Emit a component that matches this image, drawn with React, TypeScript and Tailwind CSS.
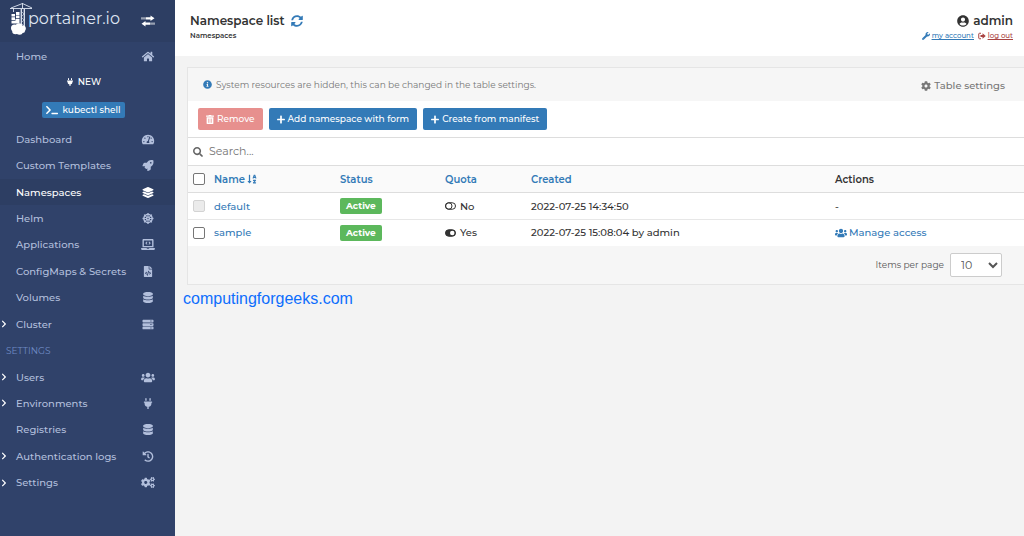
import type { ReactNode } from 'react';
import type { IconType } from 'react-icons';
import {
  FaChevronRight,
  FaCog,
  FaCogs,
  FaDatabase,
  FaDharmachakra,
  FaFileCode,
  FaHistory,
  FaHome,
  FaInfoCircle,
  FaLaptopCode,
  FaLayerGroup,
  FaPlug,
  FaPlus,
  FaRocket,
  FaSearch,
  FaServer,
  FaSortAlphaDown,
  FaSyncAlt,
  FaTachometerAlt,
  FaTerminal,
  FaTrashAlt,
  FaUserCircle,
  FaUsers,
  FaWrench,
} from 'react-icons/fa';
import clsx from 'clsx';

interface NavItem {
  label: string;
  icon: IconType;
  active?: boolean;
  expandable?: boolean;
}

const mainItems: NavItem[] = [
  { label: 'Dashboard', icon: FaTachometerAlt },
  { label: 'Custom Templates', icon: FaRocket },
  { label: 'Namespaces', icon: FaLayerGroup, active: true },
  { label: 'Helm', icon: FaDharmachakra },
  { label: 'Applications', icon: FaLaptopCode },
  { label: 'ConfigMaps & Secrets', icon: FaFileCode },
  { label: 'Volumes', icon: FaDatabase },
  { label: 'Cluster', icon: FaServer, expandable: true },
];

const settingsItems: NavItem[] = [
  { label: 'Users', icon: FaUsers, expandable: true },
  { label: 'Environments', icon: FaPlug, expandable: true },
  { label: 'Registries', icon: FaDatabase },
  { label: 'Authentication logs', icon: FaHistory, expandable: true },
  { label: 'Settings', icon: FaCogs, expandable: true },
];

const namespaces = [
  {
    name: 'default',
    system: true,
    quota: false,
    created: '2022-07-25 14:34:50',
  },
  {
    name: 'sample',
    system: false,
    quota: true,
    created: '2022-07-25 15:08:04 by admin',
  },
];

const LogoMark = () => (
  <svg viewBox="0 0 22 32" className="h-8 w-[22px]" fill="none" aria-hidden="true">
    <g stroke="#dfe5f2">
      <path d="M0 5.500h22M1 5l11.500-4.500L22 5M12.500 0v6M3.500 5v4" strokeWidth=".9" />
      <path d="M11.300 6v18M14.300 6v22" strokeWidth="1.300" />
      <path d="m11 8 3 3-3 3 3 3-3 3 3 3" strokeWidth=".6" />
    </g>
    <g fill="#fff">
      <path d="M6 9h3.500v3H6zM1.500 11H5v2.500H1.500zM6 12.500h3.500v2.800H6zM1.500 14.300H5V17H1.500zM5.500 16h4v2.500h-4zM1.500 17.800h8v2.700h-8z" />
      <circle cx="4.500" cy="25" r="3.500" />
      <circle cx="9" cy="23.500" r="3.300" />
      <circle cx="12.800" cy="25.500" r="3" />
      <circle cx="5.500" cy="28" r="3.300" />
      <circle cx="9.500" cy="28.500" r="3.300" />
      <circle cx="12.500" cy="27.500" r="2.500" />
    </g>
  </svg>
);

const TransferIcon = () => (
  <svg viewBox="0 0 14 12" className="h-3 w-3.5" fill="currentColor" aria-hidden="true">
    <path d="M4.500 2.200h5V.500L13.500 3.300 9.500 6V4.400h-5zM.500 2.200h1v2.200h-1zM2.500 2.200h1v2.200h-1z" />
    <path d="M9.500 7.600h-5V6L.500 8.700l4 2.800V9.800h5zM10.500 7.600h1v2.200h-1zM12.500 7.600h1v2.200h-1z" />
  </svg>
);

const SignOutIcon = () => (
  <svg viewBox="0 0 16 14" className="h-2 w-2" fill="none" stroke="currentColor" strokeWidth="2" aria-hidden="true">
    <path d="M6 1.500H3A1.500 1.500 0 0 0 1.500 3v8A1.500 1.500 0 0 0 3 12.500h3" />
    <path d="M5 5h4V1.500L15.500 7 9 12.500V9H5z" fill="currentColor" stroke="none" />
  </svg>
);

const QuotaIcon = ({ on }: { on: boolean }) => (
  <svg viewBox="0 0 22 15" className="h-2 w-[11px]" aria-hidden="true">
    <rect x="1" y="1" width="20" height="13" rx="6.500" fill={on ? '#333' : 'none'} stroke="#333" strokeWidth="2" />
    {on ? (
      <circle cx="14.500" cy="7.500" r="4.500" fill="#fff" />
    ) : (
      <circle cx="7.500" cy="7.500" r="6.500" fill="none" stroke="#333" strokeWidth="2" />
    )}
  </svg>
);

const NavLink = ({ label, icon: Icon, active, expandable }: NavItem) => (
  <a
    href="#"
    className={clsx(
      'flex items-center pr-5 text-[10px] font-medium',
      active ? 'bg-[#2d3e63] text-white' : 'text-[#b2bfdc]'
    )}
  >
    <span className="flex w-4 shrink-0 text-white">
      {expandable && <FaChevronRight className="h-2 w-2" />}
    </span>
    <span className="grow">{label}</span>
    <Icon className="h-[11px] w-3.5" />
  </a>
);

const Sidebar = () => (
  <aside className="flex w-[175px] shrink-0 flex-col bg-[#30426a]">
    <div className="flex h-[42px] items-center bg-[#2d3e63] pr-5 pl-2.5">
      <a href="#" className="flex items-center pb-1 text-[#dfe5f2]">
        <LogoMark />
        <span className="-ml-1 text-base leading-5">portainer.io</span>
      </a>
      <button type="button" aria-label="Toggle sidebar" className="ml-auto text-white">
        <TransferIcon />
      </button>
    </div>
    <nav>
      <div className="grid h-7">
        <NavLink label="Home" icon={FaHome} />
      </div>
      <div className="flex flex-col items-center pr-2 text-[9px] font-medium text-white">
        <p className="flex h-6 items-center gap-1">
          <FaPlug className="h-2 w-2" /> NEW
        </p>
        <button
          type="button"
          className="my-2 flex h-4 items-center gap-1 rounded-xs bg-[#337ab7] px-1"
        >
          <FaTerminal className="h-2.5 w-3" /> kubectl shell
        </button>
      </div>
      <div className="grid min-h-[370px] auto-rows-fr">
        {mainItems.map(item => (
          <NavLink key={item.label} {...item} />
        ))}
        <p className="flex items-center pl-1.5 text-[9px] text-[#6f8bc4]">SETTINGS</p>
        {settingsItems.map(item => (
          <NavLink key={item.label} {...item} />
        ))}
      </div>
    </nav>
  </aside>
);

const PageHeader = () => (
  <header className="flex h-14 justify-between bg-white pt-3 pr-[11px] pl-[15px]">
    <div>
      <h1 className="flex items-center gap-1.5 text-[12px] leading-[18px] font-semibold">
        Namespace list
        <button type="button" aria-label="Refresh" className="text-[#337ab7]">
          <FaSyncAlt className="h-3 w-3" />
        </button>
      </h1>
      <p className="text-[7px] leading-3 font-semibold">Namespaces</p>
    </div>
    <div className="flex flex-col items-end">
      <p className="flex items-center gap-1 text-[12px] leading-[18px] font-semibold">
        <FaUserCircle className="h-3 w-3" /> admin
      </p>
      <div className="flex gap-1 text-[7px] leading-3 font-medium underline">
        <a href="#" className="flex items-center gap-0.5 text-[#337ab7]">
          <FaWrench className="h-2 w-2" />
          my account
        </a>
        <a href="#" className="flex items-center gap-0.5 text-[#a94442]">
          <SignOutIcon />
          log out
        </a>
      </div>
    </div>
  </header>
);

interface ToolbarButtonProps {
  icon: IconType;
  children: ReactNode;
  danger?: boolean;
}

const ToolbarButton = ({ icon: Icon, children, danger }: ToolbarButtonProps) => (
  <button
    type="button"
    disabled={danger}
    className={clsx(
      'flex h-[22px] items-center gap-[3px] rounded-xs px-2 text-[9px] font-medium text-white',
      danger ? 'bg-[#e7908e]' : 'bg-[#337ab7]'
    )}
  >
    <Icon className="h-[9px] w-2" />
    {children}
  </button>
);

const checkboxClass =
  'block h-3 w-3 appearance-none rounded-xs border border-[#767676] bg-white disabled:border-[#d3d3d3] disabled:bg-[#ebebeb]';

const NamespaceTable = () => (
  <table className="w-full table-fixed text-left text-[10px]">
    <thead className="bg-[#fafafa] text-[#337ab7]">
      <tr className="h-[27px] border-y border-[#ddd]">
        <th className="w-[152px] pl-[5px] font-semibold">
          <div className="flex items-center gap-[9px]">
            <input type="checkbox" aria-label="Select all" className={checkboxClass} />
            <a href="#" className="flex items-center gap-0.5">
              Name <FaSortAlphaDown className="h-2.5 w-2.5" />
            </a>
          </div>
        </th>
        <th className="w-[105px] font-semibold">Status</th>
        <th className="w-[86px] font-semibold">Quota</th>
        <th className="w-[304px] font-semibold">Created</th>
        <th className="font-semibold text-[#333]">Actions</th>
      </tr>
    </thead>
    <tbody className="bg-white font-medium">
      {namespaces.map(({ name, system, quota, created }) => (
        <tr key={name} className="h-[27px] border-b border-[#e7e7e7] last:h-[26px] last:border-b-0">
          <td className="pl-[5px]">
            <div className="flex items-center gap-[9px]">
              <input type="checkbox" aria-label={`Select ${name}`} disabled={system} className={checkboxClass} />
              <a href="#" className="text-[#337ab7]">{name}</a>
            </div>
          </td>
          <td>
            <span className="inline-flex h-4 items-center rounded-xs bg-[#5cb85c] px-1.5 align-middle text-[9px] font-bold text-white">
              Active
            </span>
          </td>
          <td>
            <span className="flex items-center gap-1">
              <QuotaIcon on={quota} /> {quota ? 'Yes' : 'No'}
            </span>
          </td>
          <td>{created}</td>
          <td>
            {system ? (
              '-'
            ) : (
              <a href="#" className="flex items-center gap-0.5 text-[#337ab7]">
                <FaUsers className="h-2.5 w-3" /> Manage access
              </a>
            )}
          </td>
        </tr>
      ))}
    </tbody>
  </table>
);

const NamespacePanel = () => (
  <section className="border-y border-l border-[#e5e5e5] bg-[#f6f6f6]">
    <div className="flex h-[33px] items-center justify-between pr-[19px] pl-[15px] text-[#777]">
      <p className="flex items-center gap-1 text-[9px]">
        <FaInfoCircle className="h-[9px] w-[9px] text-[#337ab7]" />
        System resources are hidden, this can be changed in the table settings.
      </p>
      <button type="button" className="flex items-center gap-[3px] pt-0.5 text-[10px] font-medium">
        <FaCog className="h-2.5 w-2.5" /> Table settings
      </button>
    </div>
    <div className="flex gap-1.5 bg-white px-2.5 py-[7px]">
      <ToolbarButton icon={FaTrashAlt} danger>Remove</ToolbarButton>
      <ToolbarButton icon={FaPlus}>Add namespace with form</ToolbarButton>
      <ToolbarButton icon={FaPlus}>Create from manifest</ToolbarButton>
    </div>
    <label className="flex h-7 items-center gap-1.5 border-t border-[#ddd] bg-white pl-[5px]">
      <FaSearch className="h-2.5 w-2.5 text-[#666]" />
      <input
        type="text"
        aria-label="Search"
        placeholder="Search..."
        className="grow text-[11px] outline-none placeholder:text-[#757575]"
      />
    </label>
    <NamespaceTable />
    <div className="flex h-[38px] items-center justify-end gap-1.5 pr-[22px] text-[#555]">
      <label htmlFor="page-size" className="text-[9px]">Items per page</label>
      <select
        id="page-size"
        defaultValue="10"
        className="h-6 w-[52px] rounded-xs border border-[#ccc] bg-white pl-1.5 text-[11px]"
      >
        <option>10</option>
        <option>25</option>
        <option>50</option>
        <option>100</option>
      </select>
    </div>
  </section>
);

const App = () => (
  <div className="flex min-h-screen bg-[#f3f3f3] font-['Montserrat',Inter,sans-serif] text-[#333]">
    <Sidebar />
    <main className="min-w-0 grow">
      <PageHeader />
      <div className="pt-[11px] pl-3">
        <NamespacePanel />
      </div>
      <a
        href="#"
        className="ml-2 inline-block pt-0.5 font-['Liberation_Sans',Arial,sans-serif] text-base text-[#0d6efd]"
      >
        computingforgeeks.com
      </a>
    </main>
  </div>
);

export default App;
